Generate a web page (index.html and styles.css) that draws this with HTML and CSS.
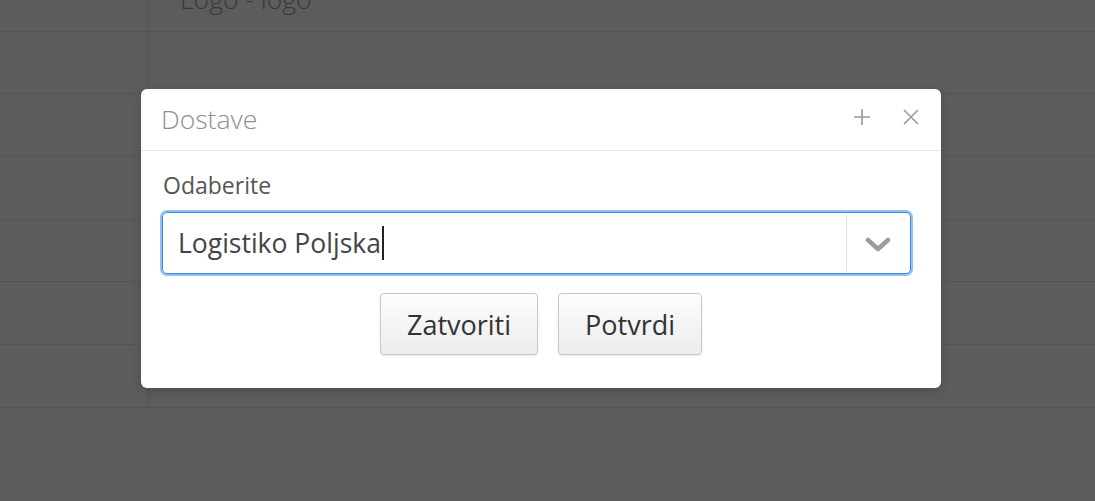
FILE: index.html
```html
<!DOCTYPE html>
<html>
<head>
<meta charset="utf-8">
<link rel="stylesheet" href="styles.css">
</head>
<body>
<div class="page">
  <div class="grid">
    <div class="row"><div class="cell-left"></div><div class="cell-right"><span class="logo-text">Logo - logo</span></div></div>
    <div class="row"><div class="cell-left"></div><div class="cell-right"></div></div>
    <div class="row"><div class="cell-left"></div><div class="cell-right"></div></div>
    <div class="row"><div class="cell-left"></div><div class="cell-right"></div></div>
    <div class="row"><div class="cell-left"></div><div class="cell-right"></div></div>
    <div class="row"><div class="cell-left"></div><div class="cell-right"></div></div>
    <div class="row"><div class="cell-left"></div><div class="cell-right"></div></div>
  </div>

  <div class="modal">
    <div class="modal-header">
      <span class="modal-title">Dostave</span>
      <div class="header-tools">
        <svg class="tool" width="20" height="20" viewBox="0 0 20 20"><path d="M10 2v16M2 10h16" stroke="#9a9a9a" stroke-width="1.6" fill="none"/></svg>
        <svg class="tool" width="20" height="20" viewBox="0 0 20 20"><path d="M3 3l14 14M17 3L3 17" stroke="#9a9a9a" stroke-width="1.6" fill="none"/></svg>
      </div>
    </div>
    <div class="modal-body">
      <div class="field-label">Odaberite</div>
      <div class="select">
        <div class="select-value">Logistiko Poljska<span class="caret"></span></div>
        <div class="select-arrow">
          <svg width="26" height="16" viewBox="0 0 26 16"><path d="M3 3l10 9 10-9" stroke="#9c9c9c" stroke-width="4.5" fill="none" stroke-linecap="round" stroke-linejoin="round"/></svg>
        </div>
      </div>
    </div>
    <div class="modal-footer">
      <button class="btn">Zatvoriti</button>
      <button class="btn">Potvrdi</button>
    </div>
  </div>
</div>
</body>
</html>
```

FILE: styles.css
```css
html, body {
  margin: 0;
  padding: 0;
}
body {
  width: 1095px;
  height: 501px;
  overflow: hidden;
  background: #5c5c5c;
  font-family: "Open Sans", "Liberation Sans", sans-serif;
}
.page {
  position: relative;
  width: 1095px;
  height: 501px;
  overflow: hidden;
}
.grid {
  margin-top: -31px;
  display: flex;
  flex-direction: column;
}
.row {
  display: flex;
  height: 62.7px;
  box-sizing: border-box;
  border-bottom: 1px solid #535353;
}
.cell-left {
  width: 148px;
  border-right: 1px solid #515151;
}
.cell-right {
  flex: 1;
  display: flex;
  align-items: center;
  padding-left: 31px;
}
.logo-text {
  font-size: 26.5px;
  font-weight: 300;
  color: #383838;
  position: relative;
  top: -1px;
}
.modal {
  position: absolute;
  left: 141px;
  top: 89px;
  width: 800px;
  height: 299px;
  background: #fff;
  border-radius: 6px;
  box-shadow: 0 3px 10px rgba(0,0,0,0.15);
  display: flex;
  flex-direction: column;
}
.modal-header {
  height: 61px;
  border-bottom: 1px solid #e5e5e5;
  display: flex;
  align-items: center;
  justify-content: space-between;
  padding: 0 21px;
}
.modal-title {
  font-size: 26.5px;
  font-weight: 300;
  color: #8e8e8e;
  position: relative;
  top: -1px;
  left: -1px;
}
.header-tools {
  display: flex;
  gap: 29px;
  align-items: center;
  position: relative;
  top: -3px;
  right: -1px;
}
.tool {
  display: block;
}
.modal-body {
  padding: 19px 30px 0 20px;
}
.field-label {
  font-size: 23px;
  color: #555;
  line-height: 30px;
  padding-left: 2px;
}
.select {
  margin-top: 12px;
  height: 62px;
  box-sizing: border-box;
  border: 1px solid #3a87dc;
  border-radius: 5px;
  box-shadow: 0 0 0 2px rgba(110, 170, 240, 0.75);
  display: flex;
  align-items: stretch;
  margin-left: 1px;
}
.select-value {
  flex: 1;
  display: flex;
  align-items: center;
  padding-left: 15px;
  font-size: 26.5px;
  color: #444;
}
.caret {
  display: inline-block;
  width: 2px;
  height: 34px;
  background: #222;
  margin-left: 1px;
}
.select-arrow {
  width: 63px;
  border-left: 1px solid #dedede;
  margin: 2px 0;
  display: flex;
  align-items: center;
  justify-content: center;
}
.select-arrow svg {
  display: block;
  position: relative;
  top: 2px;
  left: -1px;
}
.modal-footer {
  display: flex;
  justify-content: center;
  gap: 20px;
  margin-top: 19px;
}
.btn {
  height: 62px;
  box-sizing: border-box;
  padding: 0 26px;
  border: 1px solid #c8c8c8;
  border-radius: 4px;
  background: linear-gradient(#fdfdfd, #ececec);
  box-shadow: 0 1px 2px rgba(0,0,0,0.1);
  font-family: "Open Sans", "Liberation Sans", sans-serif;
  font-size: 27px;
  color: #333;
  cursor: pointer;
}
```
